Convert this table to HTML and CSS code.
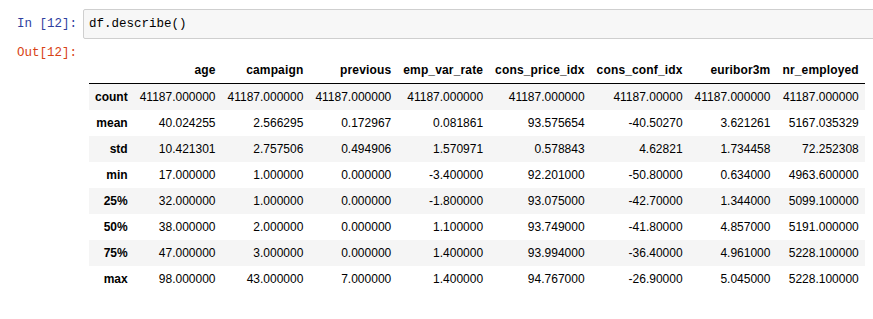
FILE: index.html
```html
<!DOCTYPE html>
<html lang="en">

<head>
    <meta charset="UTF-8">
    <meta name="viewport" content="width=device-width, initial-scale=1.0">
    <title>df.describe()</title>
    <link rel="stylesheet" href="styles.css">
</head>

<body>
    <div class="cell">
        <div class="input-row">
            <div class="prompt prompt-in">In&nbsp;[12]:</div>
            <div class="input-area">df.describe()</div>
        </div>

        <div class="output-row">
            <div class="prompt prompt-out">Out[12]:</div>
            <div class="output-area">
                <table class="dataframe">
                    <thead>
                        <tr>
                            <th></th>
                            <th>age</th>
                            <th>campaign</th>
                            <th>previous</th>
                            <th>emp_var_rate</th>
                            <th>cons_price_idx</th>
                            <th>cons_conf_idx</th>
                            <th>euribor3m</th>
                            <th>nr_employed</th>
                        </tr>
                    </thead>
                    <tbody>
                        <tr>
                            <th>count</th>
                            <td>41187.000000</td>
                            <td>41187.000000</td>
                            <td>41187.000000</td>
                            <td>41187.000000</td>
                            <td>41187.000000</td>
                            <td>41187.00000</td>
                            <td>41187.000000</td>
                            <td>41187.000000</td>
                        </tr>
                        <tr>
                            <th>mean</th>
                            <td>40.024255</td>
                            <td>2.566295</td>
                            <td>0.172967</td>
                            <td>0.081861</td>
                            <td>93.575654</td>
                            <td>-40.50270</td>
                            <td>3.621261</td>
                            <td>5167.035329</td>
                        </tr>
                        <tr>
                            <th>std</th>
                            <td>10.421301</td>
                            <td>2.757506</td>
                            <td>0.494906</td>
                            <td>1.570971</td>
                            <td>0.578843</td>
                            <td>4.62821</td>
                            <td>1.734458</td>
                            <td>72.252308</td>
                        </tr>
                        <tr>
                            <th>min</th>
                            <td>17.000000</td>
                            <td>1.000000</td>
                            <td>0.000000</td>
                            <td>-3.400000</td>
                            <td>92.201000</td>
                            <td>-50.80000</td>
                            <td>0.634000</td>
                            <td>4963.600000</td>
                        </tr>
                        <tr>
                            <th>25%</th>
                            <td>32.000000</td>
                            <td>1.000000</td>
                            <td>0.000000</td>
                            <td>-1.800000</td>
                            <td>93.075000</td>
                            <td>-42.70000</td>
                            <td>1.344000</td>
                            <td>5099.100000</td>
                        </tr>
                        <tr>
                            <th>50%</th>
                            <td>38.000000</td>
                            <td>2.000000</td>
                            <td>0.000000</td>
                            <td>1.100000</td>
                            <td>93.749000</td>
                            <td>-41.80000</td>
                            <td>4.857000</td>
                            <td>5191.000000</td>
                        </tr>
                        <tr>
                            <th>75%</th>
                            <td>47.000000</td>
                            <td>3.000000</td>
                            <td>0.000000</td>
                            <td>1.400000</td>
                            <td>93.994000</td>
                            <td>-36.40000</td>
                            <td>4.961000</td>
                            <td>5228.100000</td>
                        </tr>
                        <tr>
                            <th>max</th>
                            <td>98.000000</td>
                            <td>43.000000</td>
                            <td>7.000000</td>
                            <td>1.400000</td>
                            <td>94.767000</td>
                            <td>-26.90000</td>
                            <td>5.045000</td>
                            <td>5228.100000</td>
                        </tr>
                    </tbody>
                </table>
            </div>
        </div>
    </div>
</body>

</html>
```

FILE: styles.css
```css
body {
    margin: 0;
    padding: 0;
    background-color: #ffffff;
    overflow: hidden;
}

.cell {
    padding-top: 9px;
}

.input-row,
.output-row {
    display: flex;
    align-items: flex-start;
}

.prompt {
    flex: 0 0 83px;
    box-sizing: border-box;
    padding-right: 6px;
    text-align: right;
    font-family: "Liberation Mono", monospace;
    font-size: 12.5px;
    white-space: nowrap;
}

.prompt-in {
    color: #303f9f;
    line-height: 30px;
}

.prompt-out {
    color: #d84315;
    line-height: 17px;
}

.input-area {
    flex: 1;
    height: 30px;
    box-sizing: border-box;
    margin-right: -4px;
    padding-left: 5px;
    border: 1px solid #cfcfcf;
    border-radius: 2px;
    background-color: #f7f7f7;
    font-family: "Liberation Mono", monospace;
    font-size: 12.5px;
    line-height: 29px;
    color: #000000;
}

.output-row {
    margin-top: 6px;
}

.output-area {
    flex: 1;
    padding-top: 12px;
    padding-left: 6px;
}

.dataframe {
    border-collapse: collapse;
    border-spacing: 0;
    border: none;
    font-family: "Liberation Sans", Arial, sans-serif;
    font-size: 12px;
    color: #000000;
}

.dataframe thead {
    border-bottom: 1px solid #000000;
}

.dataframe thead th {
    letter-spacing: 0.15px;
}

.dataframe th,
.dataframe td {
    padding: 6px;
    line-height: 14px;
    text-align: right;
    vertical-align: middle;
    white-space: nowrap;
}

.dataframe th {
    font-weight: bold;
}

.dataframe td {
    font-weight: normal;
}

.dataframe tbody tr:nth-child(odd) {
    background-color: #f5f5f5;
}
```
